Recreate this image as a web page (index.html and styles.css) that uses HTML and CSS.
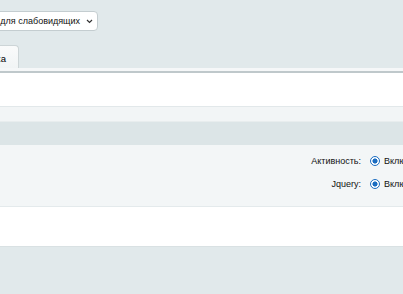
FILE: index.html
```html
<!DOCTYPE html>
<html lang="ru">
<head>
    <meta charset="UTF-8">
    <title>Настройки модуля</title>
    <link rel="stylesheet" href="styles.css">
</head>
<body>
    <div class="toolbar">
        <div class="site-select">
            <span>Версия для слабовидящих</span>
            <svg class="chevron" width="7" height="5" viewBox="0 0 7 5"><path d="M1 1l2.5 2.5L6 1" fill="none" stroke="#333" stroke-width="1.2"/></svg>
        </div>
    </div>

    <div class="tabs">
        <div class="tab">Настройка</div>
    </div>

    <div class="panel">
        <div class="panel-top"></div>
        <div class="blank"></div>
        <div class="strip"></div>
        <div class="heading"></div>
        <div class="fields">
            <div class="field">
                <label>Активность:</label>
                <div class="radio-wrap"><span class="radio"></span>Включено</div>
            </div>
            <div class="field">
                <label>Jquery:</label>
                <div class="radio-wrap"><span class="radio"></span>Включено</div>
            </div>
        </div>
        <div class="blank blank-bottom"></div>
    </div>
</body>
</html>
```

FILE: styles.css
```css
* {
    box-sizing: border-box;
    margin: 0;
    padding: 0;
}

html, body {
    overflow: hidden;
}

body {
    background-color: #e1e9eb;
    font-family: "Liberation Sans", Arial, sans-serif;
    font-size: 9px;
    color: #000;
}

.toolbar {
    height: 45px;
    padding-top: 11px;
}

.site-select {
    display: flex;
    align-items: center;
    justify-content: flex-end;
    gap: 6px;
    width: 170px;
    height: 20px;
    margin-left: -72px;
    padding: 0 4px 0 8px;
    background: #fff;
    border: 1px solid #c4cdd0;
    border-radius: 4px;
    color: #111;
    white-space: nowrap;
    overflow: hidden;
}

.tabs {
    display: flex;
    height: 23px;
}

.tab {
    width: 80px;
    margin-left: -61px;
    padding: 7px 12px 0 0;
    text-align: right;
    background: linear-gradient(#fafbfb, #f1f4f5);
    border: 1px solid #cdd5d7;
    border-bottom: none;
    border-radius: 0 4px 0 0;
    font-size: 9.5px;
    white-space: nowrap;
    overflow: hidden;
}

.panel {
    width: 800px;
}

.panel-top {
    height: 5px;
    background: #f5f7f8;
    border-bottom: 2px solid #bfc8cb;
}

.blank {
    height: 34px;
    background: #fff;
    border-bottom: 1px solid #e2e8ea;
}

.strip {
    height: 14px;
    background: #f2f5f6;
}

.heading {
    height: 24px;
    background: #dce5e7;
    border-top: 1px solid #e8edee;
}

.fields {
    display: grid;
    padding: 4px 0 11px;
    background: #f3f6f7;
    border-bottom: 1px solid #e4eaec;
}

.field {
    display: grid;
    grid-template-columns: 361px 1fr;
    column-gap: 9px;
    align-items: center;
    height: 23px;
}

.field label {
    text-align: right;
    color: #111;
}

.radio-wrap {
    display: flex;
    align-items: center;
    gap: 4px;
    color: #111;
}

.radio {
    width: 10px;
    height: 10px;
    border-radius: 50%;
    border: 1.5px solid #1b6dc1;
    background: radial-gradient(circle, #1b6dc1 0 2.3px, #fff 2.8px);
}

.blank-bottom {
    height: 40px;
    border-bottom: 1px solid #d9e1e3;
}
```
